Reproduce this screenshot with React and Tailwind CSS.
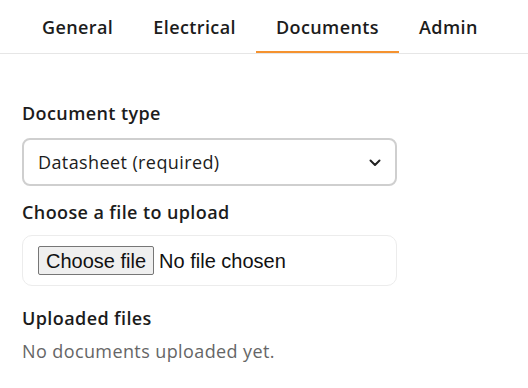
import React, { useState } from "react";

const tabs = ["General", "Electrical", "Documents", "Admin"];

const App = () => {
  const [active, setActive] = useState("Documents");
  const [docType, setDocType] = useState("datasheet");
  const [fileName, setFileName] = useState("");

  return (
    <div className="min-h-screen bg-white text-[#1c1c1c] tracking-[0.4px] font-['Open_Sans','Liberation_Sans',sans-serif]">
      {/* Tabs */}
      <nav className="flex border-b border-[#e6e6e6] pl-[22px]">
        {tabs.map((t) => (
          <button
            key={t}
            onClick={() => setActive(t)}
            className={`h-[53px] px-5 pt-[4px] text-[18px] font-semibold border-b-2 ${
              active === t ? "border-[#f5922f]" : "border-transparent"
            }`}
          >
            {t}
          </button>
        ))}
      </nav>

      {/* Documents panel */}
      <div className="px-[22px] pt-[47px]">
        <label htmlFor="docType" className="block text-[18px] font-semibold leading-6">
          Document type
        </label>
        <div className="relative mt-[13px] w-[375px]">
          <select
            id="docType"
            value={docType}
            onChange={(e) => setDocType(e.target.value)}
            className="w-[375px] h-[48px] appearance-none rounded-[8px] border-2 border-[#cfcfcf] bg-white pl-[14px] text-[18px] tracking-[0.4px] outline-none"
          >
            <option value="datasheet">Datasheet (required)</option>
            <option value="manual">Manual</option>
            <option value="certificate">Certificate</option>
          </select>
          <svg
            className="pointer-events-none absolute left-[347px] top-[21px]"
            width="12"
            height="8"
            viewBox="0 0 12 8"
            fill="none"
          >
            <path d="M1.5 1.5 L6 6 L10.5 1.5" stroke="#222" strokeWidth="2" strokeLinecap="round" strokeLinejoin="round" />
          </svg>
        </div>

        <label className="mt-[14px] block text-[18px] font-semibold leading-6">
          Choose a file to upload
        </label>
        <div className="mt-[11px] w-[375px] h-[51px] rounded-[10px] border border-[#ececec] flex items-center pl-[15px] tracking-normal font-['Liberation_Sans',sans-serif] text-[20px] text-[#111]">
          <label className="h-[29px] px-[7px] flex items-center border border-[#767676] rounded-[2px] bg-[#efefef] cursor-default">
            Choose file
            <input
              type="file"
              className="hidden"
              onChange={(e) => setFileName(e.target.files[0]?.name || "")}
            />
          </label>
          <span className="ml-[5px]">{fileName || "No file chosen"}</span>
        </div>

        <h3 className="mt-[20px] text-[18px] font-semibold leading-6">Uploaded files</h3>
        <p className="mt-[9px] text-[18px] leading-6 text-[#666]">No documents uploaded yet.</p>
      </div>
    </div>
  );
};

export default App;
